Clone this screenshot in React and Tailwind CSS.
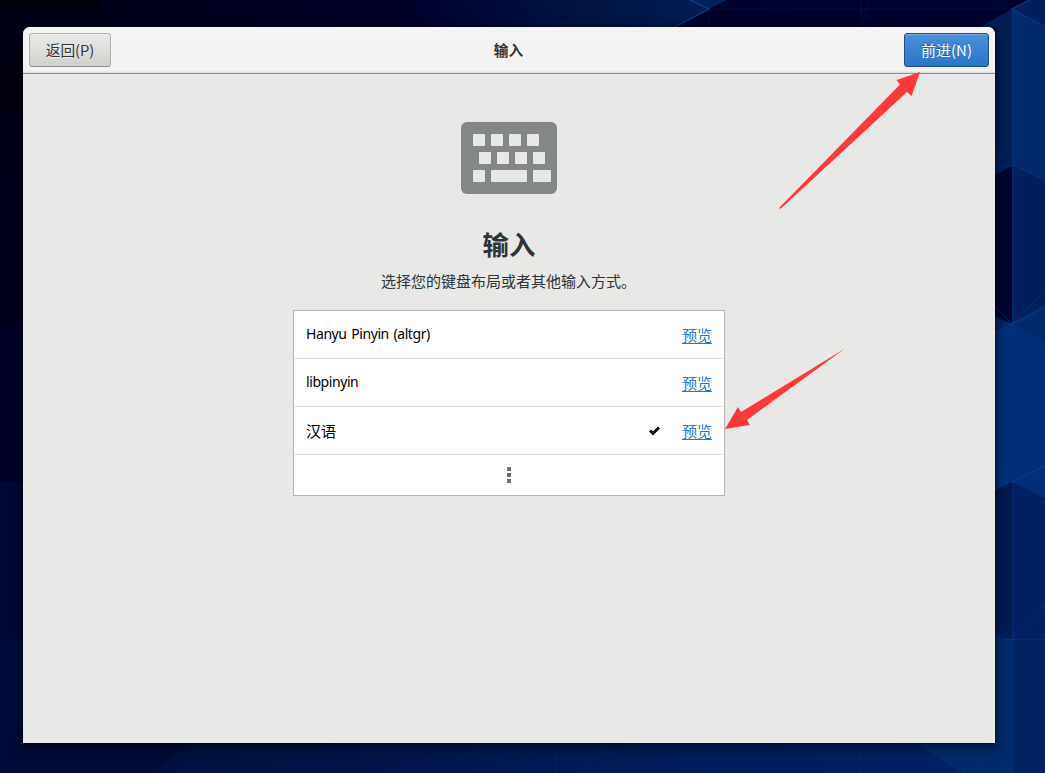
import React from 'react';

const rows = [
  { name: 'Hanyu Pinyin (altgr)', latin: true },
  { name: 'libpinyin', latin: true },
  { name: '汉语', selected: true },
];

function Wallpaper() {
  return (
    <svg className="absolute inset-0" width="1045" height="773" viewBox="0 0 1045 773" aria-hidden="true">
      <defs>
        <linearGradient id="top" x1="0" x2="1">
          <stop offset="0" stopColor="#000014" />
          <stop offset=".4" stopColor="#000028" />
          <stop offset="1" stopColor="#00032f" />
        </linearGradient>
        <linearGradient id="facet" gradientUnits="userSpaceOnUse" x1="400" y1="0" x2="709" y2="0">
          <stop offset="0" stopColor="#00002a" />
          <stop offset=".6" stopColor="#001444" />
          <stop offset="1" stopColor="#001b55" />
        </linearGradient>
        <linearGradient id="bottom" x1="0" x2="1">
          <stop offset="0" stopColor="#000b38" />
          <stop offset=".3" stopColor="#001348" />
          <stop offset=".65" stopColor="#001c5c" />
          <stop offset="1" stopColor="#002468" />
        </linearGradient>
      </defs>
      <rect width="1045" height="400" fill="url(#top)" />
      <rect y="400" width="1045" height="373" fill="url(#bottom)" />
      <path d="M0 0H101V9H0z" fill="#00000a" />
      <path d="M0 60H24V113H0z" fill="#00000d" />
      <path d="M0 113H24V220H0z" fill="#000018" />
      <path d="M0 168H24V325H0z" fill="#00001b" />
      <path d="M0 325H24V482H0z" fill="#000028" />
      <path d="M0 482H24V639H0z" fill="#000833" />
      <path d="M0 639H24V773H0z" fill="#000d3b" />
      <path d="M0 730H205L151 773H0z" fill="#000b37" />
      <path d="M400 0H690L709 9L673 28H400z" fill="url(#facet)" />
      <path d="M690 0H727L709 9z" fill="#00205c" />
      <path d="M980 27L1012 9V166L995 175V27z" fill="#001e55" />
      <path d="M1012 9L1030 0H1045V27z" fill="#00205c" />
      <path d="M1012 9L1045 27V182L1012 166z" fill="#002a6b" />
      <path d="M990 178L1012 166V324L990 314z" fill="#00042e" />
      <path d="M1012 166L1045 182V324H1012z" fill="#00205d" />
      <path d="M990 314L1012 324L990 335z" fill="#00255f" />
      <path d="M990 335L1012 324L1045 307V498L1012 482L990 493z" fill="#002f7a" />
      <path d="M1012 324L1045 307V342z" fill="#002a6d" />
      <path d="M990 493L1012 482V639L990 628z" fill="#001a51" />
      <path d="M1012 482L1045 498V639H1012z" fill="#002263" />
      <path d="M910 740L963 773H1013V639H990V740z" fill="#002b6d" />
      <path d="M1013 639H1045V773H1013z" fill="#002464" />
      <g fill="none" stroke="#003b87" strokeWidth="1">
        <path d="M690 0L709 9L673 28M1045 -8L1012 9L1045 27M990 335L1045 307M1012 482L1045 466" strokeWidth="1.4" />
        <path d="M1012.5 9V773M990 639.500H1045M990 166.500H1012M990 324.500H1012M990 482.500H1012M1012 324L1045 291M1012 482L1045 449M1012 639L1045 606M990 144L1012 166M990 302L1012 324M990 460L1012 482M990 617L1012 639" opacity=".45" />
        <path d="M709 9H1012M861 0V27L869 0M861 9L878 27M709 9L726 27M709 9V27M510 743L532 773M556 743V773M608 743L581 773M708 743V773M808 743L837 773M860 743V773M960 743L990 773" opacity=".24" />
      </g>
    </svg>
  );
}

function Keyboard() {
  return (
    <svg width="96" height="72" viewBox="0 0 96 72" className="block" aria-hidden="true">
      <rect width="96" height="72" rx="6" fill="#838786" />
      <g fill="#e8e8e6">
        {[12, 30, 48, 66].map((x) => <rect key={x} x={x} y="12" width="12" height="12" rx="1" />)}
        {[18, 36, 54, 72].map((x) => <rect key={x} x={x} y="30" width="12" height="12" rx="1" />)}
        <rect x="12" y="48" width="12" height="12" rx="1" />
        <rect x="30" y="48" width="36" height="12" rx="1" />
        <rect x="72" y="48" width="18" height="12" rx="1" />
      </g>
    </svg>
  );
}

function Arrows() {
  return (
    <svg className="pointer-events-none absolute inset-0" width="1045" height="773" viewBox="0 0 1045 773" aria-hidden="true">
      <g fill="#ff3938">
        <path d="M920 72L896.500 80L900 84.500L779.500 207.500Q779 209 781 208.500L907 92L911.500 96z" />
        <path d="M725 429L738 407L741 412L845 348.500L747 420L750 425z" />
      </g>
    </svg>
  );
}

export default function App() {
  return (
    <div className="relative h-[773px] w-[1045px] overflow-hidden bg-[#000020] pl-[23px] pt-[27px] font-['Noto_Sans_CJK_SC',sans-serif] text-[15px] text-[#2e3436]">
      <Wallpaper />
      <main className="relative flex h-[716px] w-[972px] flex-col overflow-hidden rounded-t-[7px] bg-[#e8e8e6] shadow-[0_3px_14px_1px_rgba(0,0,0,0.6),0_0_0_1px_rgba(0,0,0,0.2)]">
        <header className="flex h-[47px] shrink-0 items-center justify-between border-b border-[#8f8f8b] bg-[linear-gradient(#f4f4f4_0,#f3f3f3_44px,#d9d9d6_46px)] px-1.5">
          <button className="flex h-[34px] w-[82px] items-center justify-center rounded-[3px] border border-[#b0b0ac] border-b-[#91918c] bg-linear-to-b from-[#e8e8e7] via-[#dededc] to-[#cfcfcd] text-[14.67px] leading-none shadow-[inset_0_1px_#f0f0ef] [text-shadow:0_1px_#ffffffaa]">返回(P)</button>
          <h1 className="pl-[2px] text-[14.67px] leading-none font-bold">输入</h1>
          <button className="flex h-[34px] w-[85px] items-center justify-center rounded-[3px] border border-[#1c5187] bg-linear-to-b from-[#4a90d9] to-[#2a76c6] pb-[2px] text-[15px] leading-none text-white shadow-[inset_0_1px_#76abe2] [text-shadow:0_-1px_#184c80aa]">前进(N)</button>
        </header>
        <section className="flex flex-col items-center pt-12">
          <Keyboard />
          <h2 className="mt-[31px] h-[38px] text-[26.4px] leading-[38px] font-bold">输入</h2>
          <p className="mt-[7px] mr-px h-[22px] text-[15px] leading-[22px]">选择您的键盘布局或者其他输入方式。</p>
          <div className="mt-[18px] w-[432px] border border-[#b5b5b3] bg-white text-black">
            {rows.map((row) => (
              <div key={row.name} className="flex h-12 items-center border-b border-[#e2e2e0] px-3">
                {row.latin ? (
                  <span className="grow pb-[2px] font-['Noto_Sans',sans-serif] text-[14px] leading-5 tracking-[-0.42px] [word-spacing:1.4px]">{row.name}</span>
                ) : (
                  <span className="grow pt-px leading-5">{row.name}</span>
                )}
                {row.selected && (
                  <svg className="mr-[21px] mt-px" width="12" height="10" viewBox="0 0 12 10" fill="none" aria-hidden="true">
                    <path d="M1 4.500L4 7.500L10 1.500" stroke="#000" strokeWidth="2.800" />
                  </svg>
                )}
                <a href="#" className="mt-[2px] border-b border-[#2a76c6] text-[15px] leading-4 text-[#2a76c6]">预览</a>
              </div>
            ))}
            <div className="flex h-10 flex-col items-center justify-center gap-0.5">
              <i className="size-1 bg-[#707070]" />
              <i className="size-1 bg-[#707070]" />
              <i className="size-1 bg-[#707070]" />
            </div>
          </div>
        </section>
      </main>
      <Arrows />
    </div>
  );
}
